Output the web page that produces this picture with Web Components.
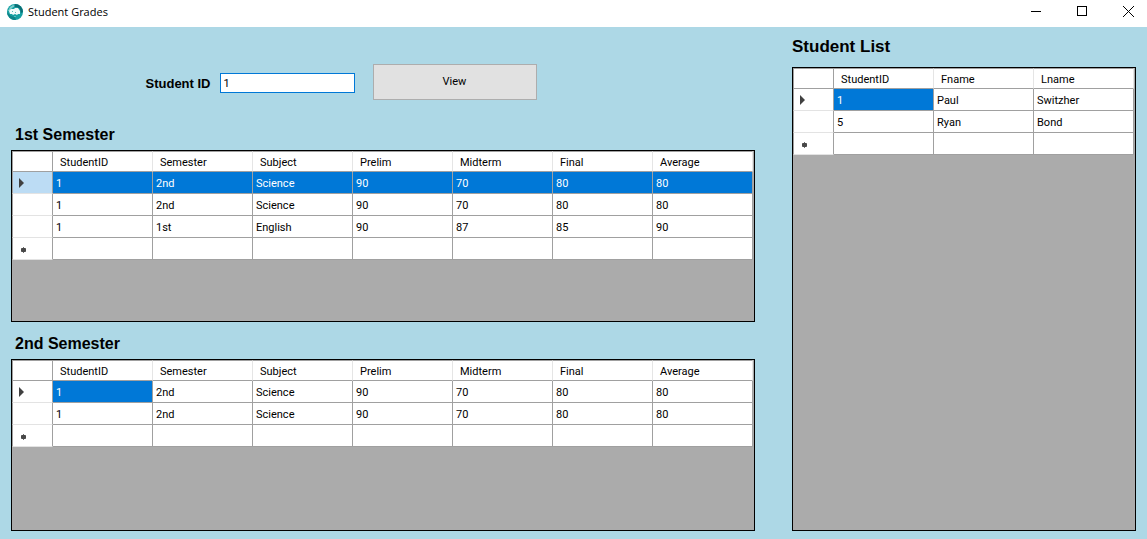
<!DOCTYPE html>
<html lang="en">
<head>
<meta charset="utf-8">
<title>Student Grades</title>
<style>
html, body { height: 100%; margin: 0; }
body { background: #add8e6; color: #000; font: 11px/14px Roboto, "Liberation Sans", sans-serif; }
</style>
</head>
<body>
<student-grades-app></student-grades-app>
<script>
const define = (name, html, setup) => {
  const template = document.createElement('template');
  template.innerHTML = html;
  customElements.define(name, class extends HTMLElement {
    constructor() {
      super();
      this.attachShadow({ mode: 'open' }).append(template.content.cloneNode(true));
    }
    connectedCallback() { if (setup) setup(this, this.shadowRoot); }
  });
};

define('window-bar', `
<style>
:host { display: flex; align-items: center; height: 27px; background: #fff; font: 11px/16px "Open Sans", "Noto Sans", sans-serif; flex: none; }
.logo { margin: 0 5px 4px 7px; flex: none; }
.title { flex: 1; padding-bottom: 3px; }
button { box-sizing: border-box; width: 46px; height: 27px; padding: 0 0 5px 8px; border: 0; background: none; display: grid; place-items: center; }
svg { display: block; }
</style>
<svg class="logo" width="16" height="16" viewBox="0 0 16 16" aria-hidden="true">
  <circle cx="8" cy="8" r="8" fill="#16a0a2"/>
  <path d="M8 0a8 8 0 0 1 8 8l-2 1-1-4-3-2-3 0z" fill="#0b6f76"/>
  <path d="M0 8l2 2 2 2 4 1 1 3a8 8 0 0 1-9-8z" fill="#0d8488"/>
  <path d="M3 3l3-2 2 1-3 2-2 3-2 0z" fill="#7fd0cf"/>
  <path d="M2 7l2-2 3 0 1-1 3 0 2 3 0 3-2 0-1 1-2-1-2 1-1-1-2 0z" fill="#f2fbfa"/>
  <path d="M5 7h1v1H5zM8 8h1v1H8zM7 12h2v1H7z" fill="#5bbcbc"/>
</svg>
<span class="title"><slot></slot></span>
<button aria-label="Minimize"><svg width="10" height="10" shape-rendering="crispEdges"><path d="M0 5h10v1H0z"/></svg></button>
<button aria-label="Maximize"><svg width="10" height="10" shape-rendering="crispEdges"><path d="M0 0h10v10H0zM1 1v8h8V1z" fill-rule="evenodd"/></svg></button>
<button aria-label="Close"><svg width="11" height="11"><path d="M0 0l11 11M11 0L0 11" stroke="#000"/></svg></button>
`);

define('lookup-form', `
<style>
:host { display: block; }
form { display: flex; align-items: center; justify-content: center; margin: 0; }
label { font: bold 13px/16px "Liberation Sans", Arial, sans-serif; margin: 4px 9px 0 0; }
input { box-sizing: border-box; width: 135px; height: 20px; margin: 2px 18px 0 0; padding: 0 3px; border: 1px solid #0078d7; background: #fff; font: inherit; color: #000; outline: 0; border-radius: 0; }
button { box-sizing: border-box; width: 164px; height: 36px; border: 1px solid #adadad; background: #e1e1e1; font: inherit; color: #000; border-radius: 0; }
</style>
<form>
  <label for="id">Student ID</label>
  <input id="id" type="text" value="1">
  <button type="button">View</button>
</form>
`);

define('grid-panel', `
<style>
:host { display: flex; flex-direction: column; min-height: 0; }
h2 { margin: 0; padding: 1px 4px 5px; font: bold 16px/20px "Liberation Sans", Arial, sans-serif; }
.area { flex: 1; min-height: 0; border: 1px solid #000; background: #ababab; overflow: hidden; }
:host([wide-gap]) h2 { padding: 1px 0 10px; font-size: 17px; }
</style>
<h2><slot name="title"></slot></h2>
<div class="area"><slot></slot></div>
`);

define('data-grid', `
<style>
:host { display: block; }
table { border-collapse: separate; border-spacing: 0; table-layout: fixed; width: max-content; background: #fff; }
th, td { box-sizing: border-box; padding: 2px 0 0 3px; text-align: left; font-weight: normal; border: 0 solid #a0a0a0; border-width: 0 1px 1px 0; width: 100px; min-width: 100px; height: 22px; }
thead th { height: 21px; border-top-width: 1px; border-right-color: #e5e5e5; padding-left: 7px; }
tr > :first-child { width: 41px; min-width: 41px; border-left-width: 1px; border-right-color: #a0a0a0; padding: 0 0 0 6px; }
tbody th { border-bottom-color: #e3e3e3; }
svg { display: block; }
.on { background: #0078d7; color: #fff; }
th.on { background: #bcdcf4; }
</style>
<table><thead></thead><tbody></tbody></table>
`, (host, root) => {
  const arrow = '<svg width="6" height="12" role="img" aria-label="Current row"><path d="M0 1l5 5L0 11z" fill="#404040"/></svg>';
  const star = '<svg width="10" height="12" role="img" aria-label="New row" shape-rendering="crispEdges"><path d="M2 5h5v4H2zM4 4h1v6H4z" fill="#707070"/><path d="M3 5h3v4H3zM2 6h5v2H2z" fill="#484848"/></svg>';
  const cols = host.getAttribute('columns').split(',');
  const rows = host.getAttribute('rows').split(';').map(r => r.split(','));
  const whole = host.hasAttribute('select-row');
  root.querySelector('thead').innerHTML = '<tr><th></th>' + cols.map(c => `<th scope="col">${c}</th>`).join('') + '</tr>';
  root.querySelector('tbody').innerHTML = rows.map((r, i) =>
    `<tr><th scope="row"${i === 0 && whole ? ' class="on"' : ''}>${i === 0 ? arrow : ''}</th>` +
    r.map((v, j) => `<td${i === 0 && (whole || j === 0) ? ' class="on"' : ''}>${v}</td>`).join('') + '</tr>').join('') +
    `<tr><th scope="row">${star}</th>${cols.map(() => '<td></td>').join('')}</tr>`;
});

define('student-grades-app', `
<style>
:host { display: flex; flex-direction: column; height: 100%; }
main { flex: 1; min-height: 0; display: grid; grid-template-columns: 744fr 344fr; gap: 37px; padding: 9px 11px 8px; }
.left { display: flex; flex-direction: column; min-height: 0; min-width: 0; }
lookup-form { padding: 28px 0 24px; margin-right: 84px; }
.left grid-panel { flex: 1; }
.left grid-panel + grid-panel { margin-top: 11px; }
</style>
<window-bar>Student Grades</window-bar>
<main>
  <div class="left">
    <lookup-form></lookup-form>
    <grid-panel><span slot="title">1st Semester</span>
      <data-grid select-row columns="StudentID,Semester,Subject,Prelim,Midterm,Final,Average" rows="1,2nd,Science,90,70,80,80;1,2nd,Science,90,70,80,80;1,1st,English,90,87,85,90"></data-grid>
    </grid-panel>
    <grid-panel><span slot="title">2nd Semester</span>
      <data-grid columns="StudentID,Semester,Subject,Prelim,Midterm,Final,Average" rows="1,2nd,Science,90,70,80,80;1,2nd,Science,90,70,80,80"></data-grid>
    </grid-panel>
  </div>
  <grid-panel wide-gap><span slot="title">Student List</span>
    <data-grid columns="StudentID,Fname,Lname" rows="1,Paul,Switzher;5,Ryan,Bond"></data-grid>
  </grid-panel>
</main>
`);
</script>
</body>
</html>
